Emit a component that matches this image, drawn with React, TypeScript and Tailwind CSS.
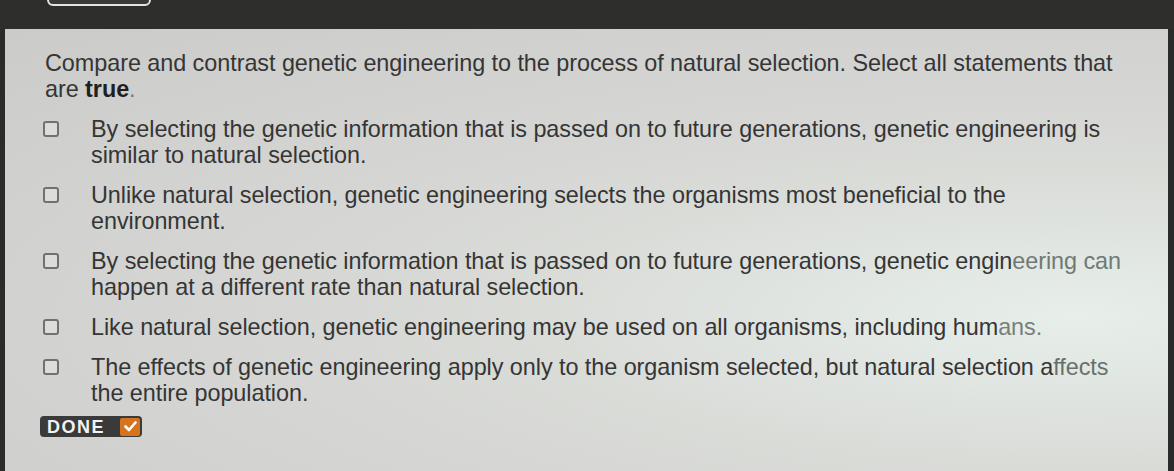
const options: { lines: React.ReactNode[] }[] = [
  {
    lines: [
      "By selecting the genetic information that is passed on to future generations, genetic engineering is",
      "similar to natural selection.",
    ],
  },
  {
    lines: [
      "Unlike natural selection, genetic engineering selects the organisms most beneficial to the",
      "environment.",
    ],
  },
  {
    lines: [
      <>
        By selecting the genetic information that is passed on to future generations, genetic engin
        <span className="text-[#6f7a75]">eering can</span>
      </>,
      "happen at a different rate than natural selection.",
    ],
  },
  {
    lines: [
      <>
        Like natural selection, genetic engineering may be used on all organisms, including hum
        <span className="text-[#75807b]">ans.</span>
      </>,
    ],
  },
  {
    lines: [
      <>
        The effects of genetic engineering apply only to the organism selected, but natural selection a
        <span className="text-[#66716c]">ffects</span>
      </>,
      "the entire population.",
    ],
  },
];

function Checkbox() {
  return (
    <div className="ml-[-2px] mt-[5px] h-[16px] w-[16px] shrink-0 rounded-[3px] border-2 border-[#717170] bg-[#dcdcda]" />
  );
}

export default function App() {
  return (
    <div className="flex h-[471px] w-[1174px] flex-col overflow-hidden bg-[#2d2d2d] font-['Liberation_Sans',Arial,sans-serif]">
      <div className="flex h-[29px] shrink-0 items-start bg-[#2e2e2d]">
        <div className="-mt-[8px] ml-[47px] h-[14px] w-[104px] rounded-[6px] border-2 border-[#e4e4e2] bg-[#3a3a3a]" />
      </div>
      <div className="flex flex-1 bg-[#292c2b]">
        <div className="ml-[5px] mr-[6px] flex flex-1 flex-col bg-[radial-gradient(ellipse_at_92%_65%,#e7efeb_0%,#dadcd8_35%,#d3d3d1_65%,#cbcbc9_100%)] pl-[40px] pt-[21px] text-[23.4px] leading-[26px] tracking-[-0.05px] text-[#353535]">
          <p>
            Compare and contrast genetic engineering to the process of natural selection. Select all statements that
            <br />
            are <span className="font-bold text-[#1f1f1f]">true</span>
            <span className="text-[#7a7a7a]">.</span>
          </p>
          <div className="mt-[14px] flex flex-col gap-[14px]">
            {options.map((o, i) => (
              <div key={i} className="flex items-start">
                <div className="w-[46px] shrink-0">
                  <Checkbox />
                </div>
                <div className="whitespace-nowrap">
                  {o.lines.map((l, j) => (
                    <div key={j}>{l}</div>
                  ))}
                </div>
              </div>
            ))}
          </div>
          <div className="ml-[-5px] mt-[10px] flex h-[21px] w-[102px] items-center rounded-[4px] bg-[#393a39] pl-[7px] pr-[2px]">
            <span className="text-[18px] font-bold leading-none tracking-[1.5px] text-[#f2f2f2]">DONE</span>
            <div className="ml-auto flex h-[18px] w-[20px] items-center justify-center rounded-[2px] bg-[#d8731d]">
              <svg width="13" height="11" viewBox="0 0 13 11" fill="none">
                <path d="M1.5 5.5 L5 9 L11.5 1.5" stroke="#fff" strokeWidth="2.6" strokeLinecap="round" strokeLinejoin="round" />
              </svg>
            </div>
          </div>
        </div>
      </div>
    </div>
  );
}
